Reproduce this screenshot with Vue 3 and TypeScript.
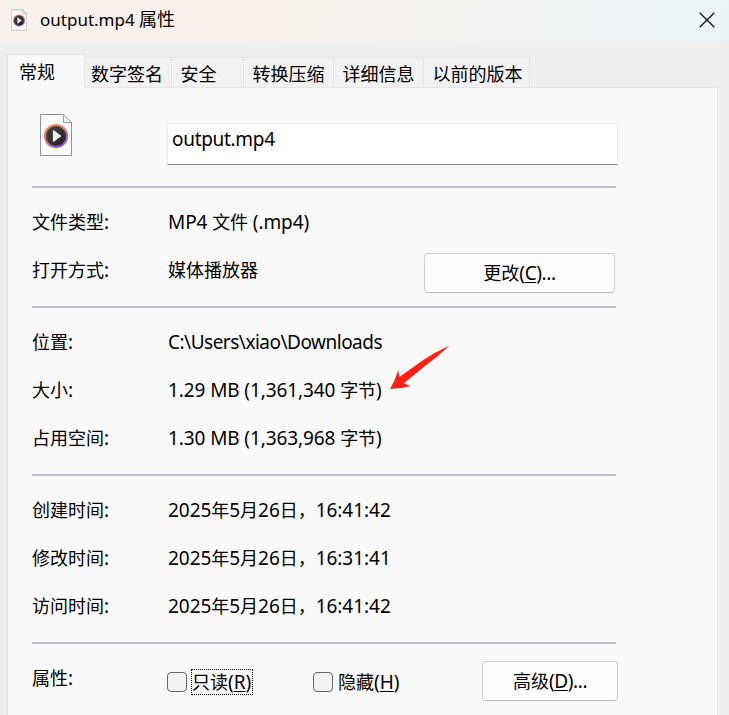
<script setup lang="ts">
import { h, type FunctionalComponent } from 'vue'

interface Row {
  label: string
  value: string
  kind?: string
  action?: boolean
}

const tabs: string[] = ['常规', '数字签名', '安全', '转换压缩', '详细信息', '以前的版本']

const groups: Row[][] = [
  [
    { label: '文件类型:', value: 'MP4 文件 (.mp4)', kind: 'size' },
    { label: '打开方式:', value: '媒体播放器', action: true },
  ],
  [
    { label: '位置:', value: 'C:\\Users\\xiao\\Downloads', kind: 'path' },
    { label: '大小:', value: '1.29 MB (1,361,340 字节)', kind: 'size' },
    { label: '占用空间:', value: '1.30 MB (1,363,968 字节)', kind: 'size' },
  ],
  [
    { label: '创建时间:', value: '2025年5月26日，16:41:42', kind: 'date' },
    { label: '修改时间:', value: '2025年5月26日，16:31:41', kind: 'date' },
    { label: '访问时间:', value: '2025年5月26日，16:41:42', kind: 'date' },
  ],
]

// Latin runs are set slightly larger than the Chinese ones
const Mixed: FunctionalComponent<{ text: string }> = (props) => {
  const runs = props.text.match(/[\x00-\x7f]+|[^\x00-\x7f]+/g) ?? []
  return h(
    'span',
    { class: 'mixed' },
    runs.map((run) => h('span', { class: /^[\x00-\x7f]/.test(run) ? 'latin' : 'han' }, run)),
  )
}
Mixed.props = ['text']
</script>

<template>
  <div class="dialog">
    <svg width="0" height="0" class="defs">
      <defs>
        <linearGradient id="ring" x1="0" y1="0" x2="0.5" y2="1">
          <stop offset="0" stop-color="#fa9348" />
          <stop offset="0.5" stop-color="#e67a62" />
          <stop offset="1" stop-color="#9455c4" />
        </linearGradient>
        <linearGradient id="disc" x1="0" y1="0" x2="1" y2="1">
          <stop offset="0" stop-color="#444" />
          <stop offset="1" stop-color="#202020" />
        </linearGradient>
        <symbol id="media" viewBox="0 0 32 42">
          <path d="M.5.5H23.5L31.5 8.5V41.5H.5Z" fill="#fafbfc" stroke="#929292" />
          <path d="M23.5.5V8.5H31.5Z" fill="#eee" stroke="#a0a0a0" />
          <circle cx="16" cy="22" r="12.1" fill="url(#ring)" />
          <circle cx="16" cy="22" r="10" fill="url(#disc)" />
          <path d="M13.4 16.4V27.6L20.8 22Z" fill="#f3f3f3" stroke="#f3f3f3" stroke-linejoin="round" />
        </symbol>
      </defs>
    </svg>

    <header class="titlebar">
      <svg class="small-icon"><use href="#media" /></svg>
      <h1 class="title">output.mp4 <span class="title-han">属性</span></h1>
      <svg class="close" viewBox="0 0 16 16"><path d="M.7.7 15.3 15.3M15.3.7.7 15.3" /></svg>
    </header>

    <nav class="tabs">
      <div v-for="(tab, i) in tabs" :key="tab" class="tab" :class="{ active: i === 0 }">{{ tab }}</div>
    </nav>

    <main class="panel">
      <div class="file">
        <svg class="big-icon"><use href="#media" /></svg>
        <div class="name"><Mixed text="output.mp4" /></div>
      </div>

      <section v-for="(group, g) in groups" :key="g" class="group">
        <div v-for="row in group" :key="row.label" class="row">
          <div class="label"><Mixed :text="row.label" /></div>
          <div class="value" :class="row.kind"><Mixed :text="row.value" /></div>
          <button v-if="row.action" class="button change"><span>更改<span class="latin">(<u>C</u>)...</span></span></button>
        </div>
      </section>

      <hr class="rule" />
      <section class="attributes">
        <div class="label"><Mixed text="属性:" /></div>
        <div class="check readonly">
          <i class="box"></i><span class="caption focus">只读<span class="latin">(<u>R</u>)</span></span>
        </div>
        <div class="check">
          <i class="box"></i><span class="caption">隐藏<span class="latin">(<u>H</u>)</span></span>
        </div>
        <button class="button advanced"><span>高级<span class="latin">(<u>D</u>)...</span></span></button>
      </section>
    </main>

    <svg class="arrow" viewBox="0 0 62 46">
      <path d="M60.5.4Q49 11.5 36 21L15 38.2 21.4 41.3Q11 44 1 44 6.8 34.5 9.2 25L10.4 32 34 15.2Q46 7 60.5.4Z" />
    </svg>
  </div>
</template>

<style>
body {
  margin: 0;
  overflow: hidden;
}
</style>

<style scoped>
.dialog {
  position: relative;
  display: flex;
  flex-direction: column;
  width: 729px;
  height: 715px;
  overflow: hidden;
  background: #efefef;
  color: #000;
  font-family: 'Noto Sans', 'Noto Sans CJK SC', sans-serif;
  font-size: 18px;
  line-height: 24px;
  font-weight: 400;
  white-space: nowrap;
}
.defs {
  position: absolute;
}
.titlebar {
  flex: none;
  box-sizing: border-box;
  height: 42px;
  display: flex;
  align-items: center;
  padding: 0 14px 3px 11px;
  background: linear-gradient(100deg, #f9f1eb 0%, #f8f1eb 38%, #f3f2ef 62%, #eef3f5 82%, #eaf4f7 100%);
}
.small-icon {
  width: 16px;
  height: 22px;
}
.title {
  flex: 1;
  margin: 0 0 0 13px;
  font-size: 17px;
  font-weight: inherit;
}
.title-han {
  font-size: 18px;
}
.close {
  width: 16px;
  height: 16px;
  fill: none;
  stroke: #191919;
  stroke-width: 1.4;
}
.tabs {
  flex: none;
  box-sizing: border-box;
  height: 45px;
  padding: 12px 0 0 7px;
  display: flex;
  align-items: flex-end;
}
.tab {
  box-sizing: border-box;
  height: 30px;
  padding: 4px 8px 0 8.5px;
  border: 1px solid #e5e5e5;
  border-width: 1px 1px 0 0;
  background: #f2f2f2;
}
.tab:nth-child(2) {
  width: 87px;
  padding-left: 6px;
}
.tab:nth-child(3) {
  width: 72px;
}
.tab:nth-child(n + 4) {
  width: 90px;
}
.tab:nth-child(6) {
  width: 106px;
}
.tab.active {
  position: relative;
  width: 78px;
  height: 34px;
  margin-bottom: -1px;
  padding: 5px 0 0 11px;
  border-left-width: 1px;
  background: #f9f9f9;
}
.panel {
  flex: 1;
  box-sizing: border-box;
  width: 711px;
  margin-left: 7px;
  padding: 0 101px 0 24px;
  border: 1px solid #e5e5e5;
  border-bottom: 0;
  background: #f9f9f9;
}
.file {
  box-sizing: border-box;
  height: 98px;
  padding: 26px 0 0 8px;
  display: flex;
}
.big-icon {
  width: 32px;
  height: 42px;
}
.name {
  box-sizing: border-box;
  width: 451px;
  height: 42px;
  margin: 9px -2px 0 95px;
  padding: 3px 4px 0;
  border: 1px solid #ececec;
  border-bottom-color: #868686;
  border-radius: 1px;
  background: #fff;
  letter-spacing: -0.3px;
}
.group {
  width: 584px;
  padding: 10px 0 12px;
  border-top: 2px solid #c2c2ca;
}
.row {
  height: 48px;
  display: flex;
  align-items: center;
}
.label {
  width: 136px;
}
.value {
  width: 256px;
}
.path {
  letter-spacing: -0.5px;
}
.size {
  letter-spacing: -0.1px;
}
.date {
  letter-spacing: -0.04px;
}
:deep(.latin) {
  font-size: 19px;
}
.button {
  box-sizing: border-box;
  height: 40px;
  padding: 0;
  border: 1px solid #d0d0d0;
  border-bottom-color: #bababa;
  border-radius: 4px;
  background: #fdfdfd;
  color: #000;
  font: inherit;
}
.button .latin {
  letter-spacing: -0.4px;
}
.change {
  width: 191px;
  margin-top: 6px;
}
u {
  text-decoration-thickness: 1px;
  text-underline-offset: 2px;
}
.rule {
  width: 584px;
  height: 2px;
  margin: 0;
  border: 0;
  background: #c2c2ca;
}
.attributes {
  display: flex;
  align-items: flex-start;
  width: 586px;
  padding-top: 11px;
}
.attributes .label {
  width: 135px;
  padding-top: 11px;
}
.check {
  display: flex;
  align-items: center;
  height: 26px;
  margin-top: 14px;
}
.readonly {
  width: 146px;
}
.box {
  box-sizing: border-box;
  width: 20px;
  height: 20px;
  border: 1px solid #666;
  border-radius: 4px;
  background: #f3f3f3;
}
.caption {
  box-sizing: border-box;
  height: 26px;
  margin-left: 4px;
  border: 1px solid transparent;
}
.focus {
  width: 62px;
  border: 1px dotted #000;
}
.advanced {
  width: 136px;
  margin: 6px 0 0 auto;
}
.arrow {
  position: absolute;
  left: 389px;
  top: 345px;
  width: 62px;
  height: 46px;
  fill: #ff2014;
}
</style>
